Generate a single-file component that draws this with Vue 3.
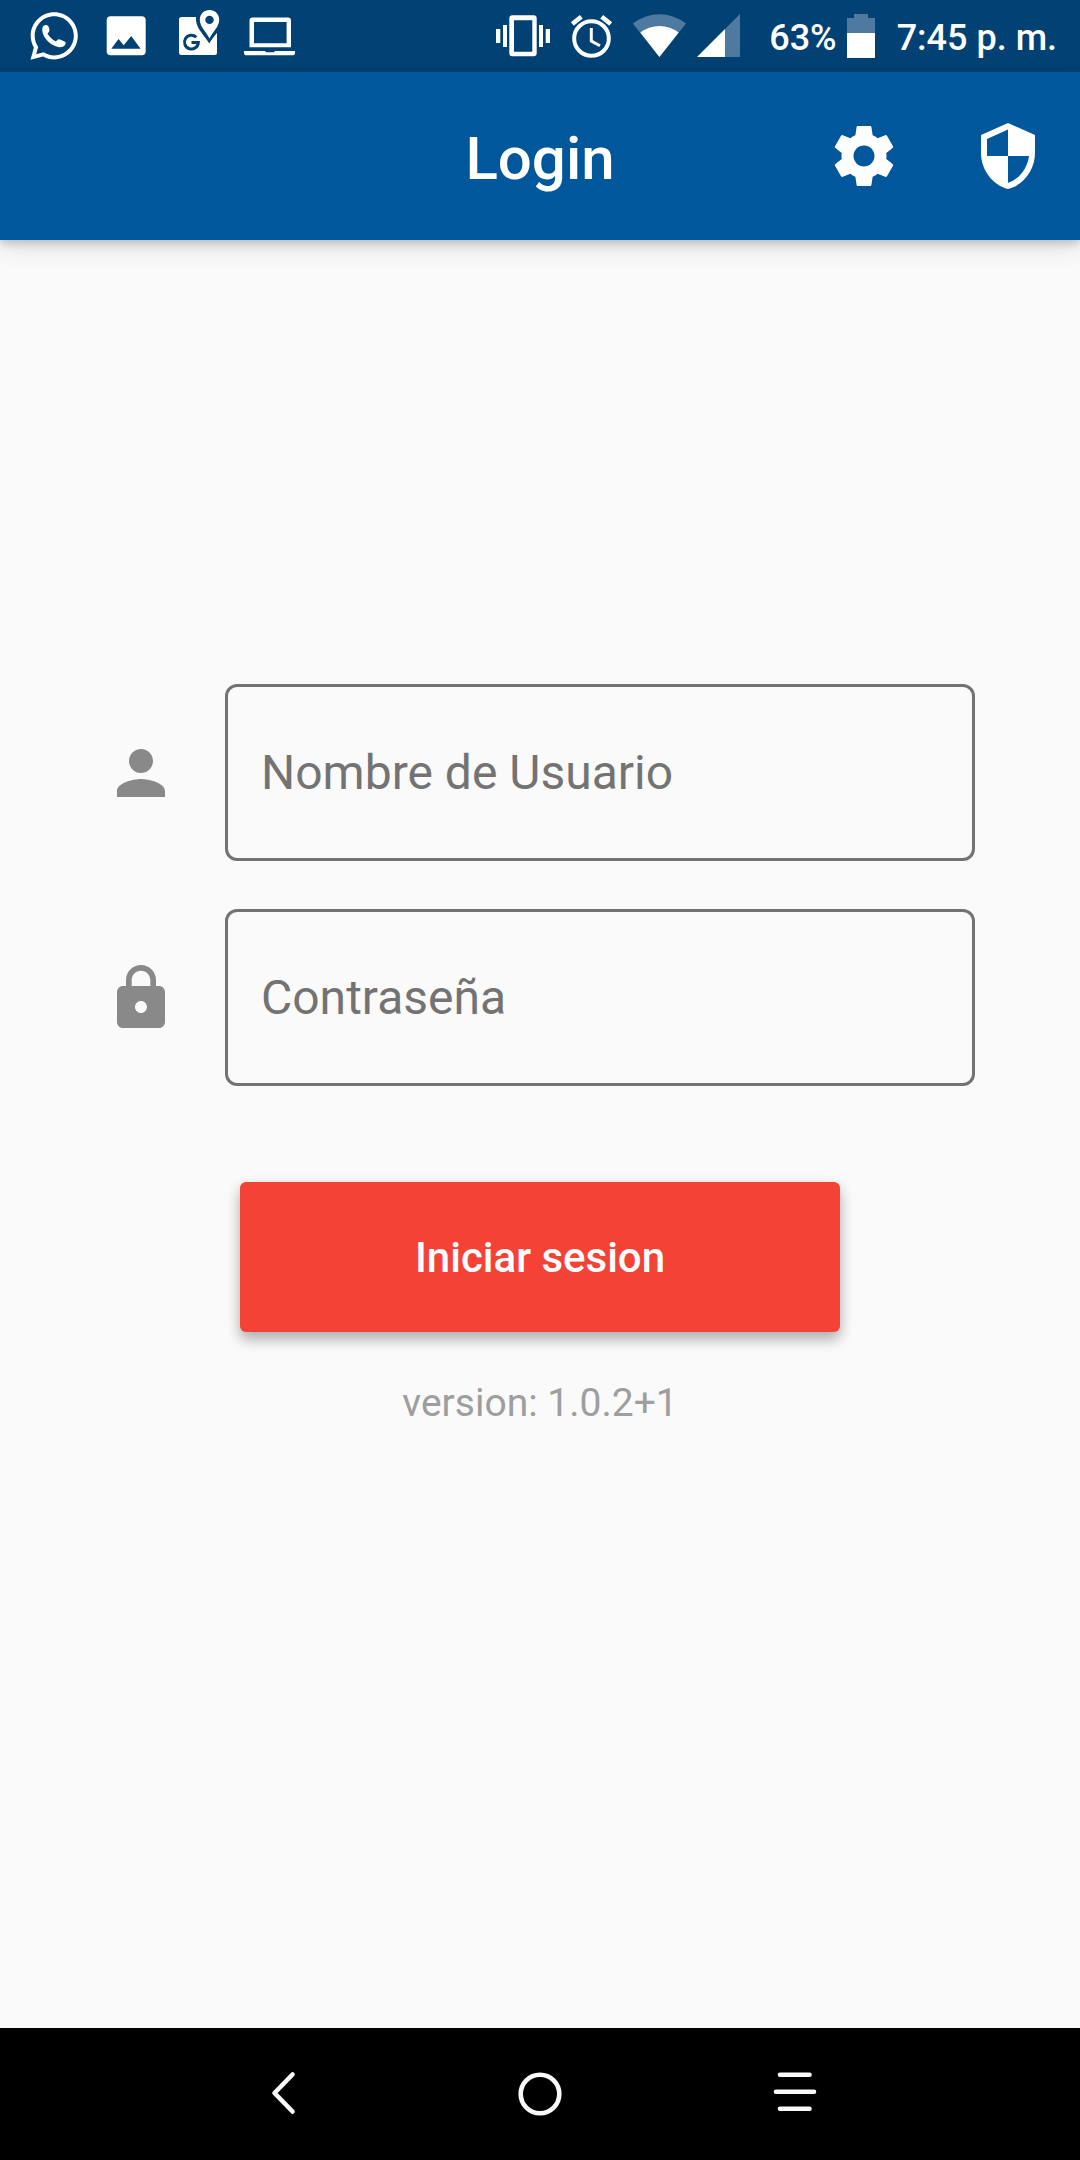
<script setup>
import { ref } from 'vue'

const username = ref('')
const password = ref('')
</script>

<template>
  <div class="screen">
    <div class="status-bar">
      <div class="notifications">
        <!-- WhatsApp -->
        <svg width="72" height="72" viewBox="18 0 72 72" fill="currentColor" aria-hidden="true">
          <path transform="translate(30.4 12.3) scale(1.98)" d="M.057 24l1.687-6.163c-1.041-1.804-1.588-3.849-1.587-5.946.003-6.556 5.338-11.891 11.893-11.891 3.181.001 6.167 1.24 8.413 3.488 2.245 2.248 3.481 5.236 3.48 8.414-.003 6.557-5.338 11.892-11.893 11.892-1.99-.001-3.951-.5-5.688-1.448l-6.305 1.654zm6.597-3.807c1.676.995 3.276 1.591 5.392 1.592 5.448 0 9.886-4.434 9.889-9.885.002-5.462-4.415-9.89-9.881-9.892-5.452 0-9.887 4.434-9.889 9.884-.001 2.225.651 3.891 1.746 5.634l-.999 3.648 3.742-.981z" />
          <path d="M42.3 29C42.3 26.5 44 25 46 25C48 25 48.5 26 49.3 29C49.8 31 49 32 47.5 33.5C49.5 37 52 39.5 56 41.5C57.5 39.5 58.5 38.8 60 39.5L64.5 41.6C66 42.3 66 43.5 65 45C63.5 47 61 47.5 58 47C50 45 43.5 38.5 42.3 31Z" />
        </svg>
        <!-- Picture -->
        <svg width="72" height="72" viewBox="90 0 72 72" aria-hidden="true">
          <rect x="106.7" y="16.3" width="39" height="39" rx="4" fill="currentColor" />
          <path d="M111.3 48.7L118.5 39L123.7 45.3L131.2 36L140.6 48.7Z" class="cut" />
        </svg>
        <!-- Map with pin -->
        <svg width="72" height="72" viewBox="162 0 72 72" aria-hidden="true">
          <rect x="179" y="17" width="38" height="38" rx="2.5" fill="currentColor" />
          <path d="M196 10V20C196.5 29 205 36 209.3 43.5C213 37 219 32 222 24V10Z" class="cut" />
          <path fill="currentColor" fill-rule="evenodd" d="M209.5 10C204 10 199.8 14.2 199.8 19.6C199.8 27 206 31.5 209.5 38.5C213 31.5 219.2 27 219.2 19.6C219.2 14.2 215 10 209.5 10ZM209.5 15.7A4.2 4.2 0 1 1 209.5 24.1A4.2 4.2 0 1 1 209.5 15.7Z" />
          <path d="M196.3 37.3A6.9 6.9 0 1 0 198.3 42.6H191.5" class="cut-line" />
        </svg>
        <!-- Laptop -->
        <svg width="72" height="72" viewBox="234 0 72 72" fill="currentColor" aria-hidden="true">
          <path fill-rule="evenodd" d="M252.5 17.5H288A3 3 0 0 1 291 20.5V47.3H249.5V20.5A3 3 0 0 1 252.5 17.5ZM254 22V43.3H286.6V22Z" />
          <path d="M244 51H265L266 52.3H274L275 51H295V54L293.5 55.3H245.5L244 54Z" />
        </svg>
      </div>
      <div class="system">
        <!-- Vibrate -->
        <svg width="68" height="72" viewBox="489 0 68 72" fill="currentColor" aria-hidden="true">
          <path fill-rule="evenodd" d="M512.3 15.3H533.7A3 3 0 0 1 536.7 18.3V53.3A3 3 0 0 1 533.7 56.3H512.3A3 3 0 0 1 509.3 53.3V18.3A3 3 0 0 1 512.3 15.3ZM514 20.3V51.7H532.3V20.3Z" />
          <path d="M496 29H500.3V43H496ZM503 25H507V47H503ZM539 25H543V47H539ZM545.7 29H550V43H545.7Z" />
        </svg>
        <!-- Alarm -->
        <svg width="68" height="72" viewBox="557 0 68 72" fill="none" stroke="currentColor" aria-hidden="true">
          <circle cx="591.5" cy="38.5" r="17.3" stroke-width="4" />
          <path d="M591.3 28V41L600 45.7" stroke-width="3" />
          <path d="M572.3 24L581.3 16.7M601.7 16.7L610.7 24" stroke-width="4.6" />
        </svg>
        <!-- Wi-Fi -->
        <svg width="68" height="72" viewBox="625 0 68 72" fill="currentColor" aria-hidden="true">
          <path fill-opacity=".3" d="M659.4 57L632.8 23.5A43 43 0 0 1 686 23.5Z" />
          <path d="M659.4 57L640.3 32.6A31 31 0 0 1 678.7 32.6Z" />
        </svg>
        <!-- Mobile signal -->
        <svg width="52" height="72" viewBox="693 0 52 72" fill="currentColor" aria-hidden="true">
          <path fill-opacity=".3" d="M725 57V29L740 14V57Z" />
          <path d="M697 57L725 29V57Z" />
        </svg>
        <span class="percent">63%</span>
        <!-- Battery -->
        <svg width="28" height="72" viewBox="847 0 28 72" fill="currentColor" aria-hidden="true">
          <path fill-opacity=".3" d="M847 33V18H854V14H868V18H875V33Z" />
          <path d="M847 33H875V58H847Z" />
        </svg>
        <span class="time">7:45 p. m.</span>
      </div>
    </div>

    <header class="app-bar">
      <h1>Login</h1>
      <div class="actions">
        <button type="button" aria-label="Ajustes">
          <svg width="72" height="72" viewBox="0 0 24 24" fill="currentColor">
            <path d="M19.43 12.98c.04-.32.07-.64.07-.98s-.03-.66-.07-.98l2.11-1.65c.19-.15.24-.42.12-.64l-2-3.46c-.12-.22-.39-.3-.61-.22l-2.49 1c-.52-.4-1.08-.73-1.69-.98l-.38-2.65C14.46 2.18 14.25 2 14 2h-4c-.25 0-.46.18-.49.42l-.38 2.65c-.61.25-1.17.59-1.69.98l-2.49-1c-.23-.09-.49 0-.61.22l-2 3.46c-.13.22-.07.49.12.64l2.11 1.65c-.04.32-.07.65-.07.98s.03.66.07.98l-2.11 1.65c-.19.15-.24.42-.12.64l2 3.46c.12.22.39.3.61.22l2.49-1c.52.4 1.08.73 1.69.98l.38 2.65c.03.24.24.42.49.42h4c.25 0 .46-.18.49-.42l.38-2.65c.61-.25 1.17-.59 1.69-.98l2.49 1c.23.09.49 0 .61-.22l2-3.46c.12-.22.07-.49-.12-.64l-2.11-1.65zM12 15.5c-1.93 0-3.5-1.57-3.5-3.5s1.57-3.5 3.5-3.5 3.5 1.57 3.5 3.5-1.57 3.5-3.5 3.5z" />
          </svg>
        </button>
        <button type="button" aria-label="Seguridad">
          <svg width="72" height="72" viewBox="0 0 24 24" fill="currentColor">
            <path d="M12 1L3 5v6c0 5.55 3.84 10.74 9 12 5.16-1.26 9-6.45 9-12V5l-9-4zm0 10.99h7c-.53 4.12-3.28 7.79-7 8.94V12H5V6.3l7-3.11v8.8z" />
          </svg>
        </button>
      </div>
    </header>

    <main>
      <form @submit.prevent>
        <div class="field">
          <label for="username" aria-label="Nombre de Usuario">
            <svg width="72" height="72" viewBox="0 0 24 24" fill="currentColor" aria-hidden="true">
              <path d="M12 12c2.21 0 4-1.79 4-4s-1.79-4-4-4-4 1.79-4 4 1.79 4 4 4zm0 2c-2.67 0-8 1.34-8 4v2h16v-2c0-2.66-5.33-4-8-4z" />
            </svg>
          </label>
          <input id="username" v-model="username" type="text" placeholder="Nombre de Usuario" autocomplete="username" />
        </div>
        <div class="field">
          <label for="password" aria-label="Contraseña">
            <svg width="72" height="72" viewBox="0 0 24 24" fill="currentColor" aria-hidden="true">
              <path d="M18 8h-1V6c0-2.76-2.24-5-5-5S7 3.24 7 6v2H6c-1.1 0-2 .9-2 2v10c0 1.1.9 2 2 2h12c1.1 0 2-.9 2-2V10c0-1.1-.9-2-2-2zm-6 9c-1.1 0-2-.9-2-2s.9-2 2-2 2 .9 2 2-.9 2-2 2zm3.1-9H8.9V6c0-1.71 1.39-3.1 3.1-3.1 1.71 0 3.1 1.39 3.1 3.1v2z" />
            </svg>
          </label>
          <input id="password" v-model="password" type="password" placeholder="Contraseña" autocomplete="current-password" />
        </div>
        <button type="submit" class="submit">Iniciar sesion</button>
      </form>
      <p class="version">version: 1.0.2+1</p>
    </main>

    <nav class="nav-bar" aria-label="Sistema">
      <button type="button" aria-label="Atrás">
        <svg width="48" height="48" viewBox="0 0 48 48">
          <path d="M32.5 4.5L14.5 23L32.5 41.5" />
        </svg>
      </button>
      <button type="button" aria-label="Inicio">
        <svg width="48" height="48" viewBox="0 0 48 48">
          <circle cx="24" cy="24" r="19.3" />
        </svg>
      </button>
      <button type="button" aria-label="Recientes">
        <svg width="48" height="48" viewBox="0 0 48 48">
          <path d="M8 4.7H37.5M4 21.7H42M8 38.8H37.5" />
        </svg>
      </button>
    </nav>
  </div>
</template>

<style>
body {
  margin: 0;
  background: #fafafa;
}
</style>

<style scoped>
.screen {
  display: flex;
  flex-direction: column;
  min-height: 100vh;
  background: #fafafa;
  font-family: Roboto, "Noto Sans", sans-serif;
}

svg {
  display: block;
  flex: none;
}

button {
  border: 0;
  padding: 0;
  background: none;
  color: inherit;
  font: inherit;
  cursor: pointer;
}

.status-bar {
  display: flex;
  justify-content: space-between;
  height: 72px;
  padding: 0 23px 0 18px;
  background: #014174;
  color: #fff;
  font-size: 36px;
  font-weight: 500;
  line-height: 76px;
  white-space: nowrap;
}

.notifications,
.system {
  display: flex;
}

.percent {
  margin: 0 10px 0 24px;
}

.time {
  margin-left: 22px;
}

.cut {
  fill: #014174;
}

.cut-line {
  fill: none;
  stroke: #014174;
  stroke-width: 3;
}

.app-bar {
  display: grid;
  grid-template-columns: 1fr auto 1fr;
  align-items: center;
  height: 168px;
  background: #01579b;
  color: #fff;
  box-shadow: 0 3px 9px rgba(0, 0, 0, 0.2), 0 6px 24px rgba(0, 0, 0, 0.12);
}

.app-bar h1 {
  grid-column: 2;
  margin: 0;
  padding-top: 6px;
  font-size: 60px;
  font-weight: 500;
  line-height: 72px;
}

.actions {
  display: flex;
  justify-content: flex-end;
}

.actions button {
  display: grid;
  place-items: center;
  width: 144px;
  height: 144px;
}

main {
  flex: 1;
  padding: 444px 105px 96px;
}

form {
  display: flex;
  flex-direction: column;
  gap: 48px;
}

.field {
  display: flex;
  align-items: center;
  gap: 48px;
  color: #898989;
}

.field input {
  flex: 1;
  min-width: 0;
  height: 177px;
  box-sizing: border-box;
  padding: 0 33px;
  border: 3px solid #737373;
  border-radius: 12px;
  background: transparent;
  color: #212121;
  font-family: inherit;
  font-size: 48px;
}

.field input::placeholder {
  color: #737373;
  opacity: 1;
}

.submit {
  align-self: center;
  width: 100%;
  max-width: 600px;
  height: 150px;
  margin-top: 48px;
  border-radius: 6px;
  background: #f44336;
  color: #fff;
  font-size: 42px;
  font-weight: 500;
  box-shadow: 0 8px 14px rgba(0, 0, 0, 0.26), 0 3px 15px rgba(0, 0, 0, 0.08);
}

.version {
  margin: 48px 0 0;
  color: #9e9e9e;
  font-size: 39px;
  line-height: 46px;
  text-align: center;
}

.nav-bar {
  display: flex;
  justify-content: center;
  gap: 208px;
  height: 132px;
  background: #000;
  color: #fafafa;
}

.nav-bar button {
  display: grid;
  place-items: center;
}

.nav-bar svg {
  fill: none;
  stroke: currentColor;
  stroke-width: 4.6;
  stroke-linecap: round;
  stroke-linejoin: round;
}
</style>
